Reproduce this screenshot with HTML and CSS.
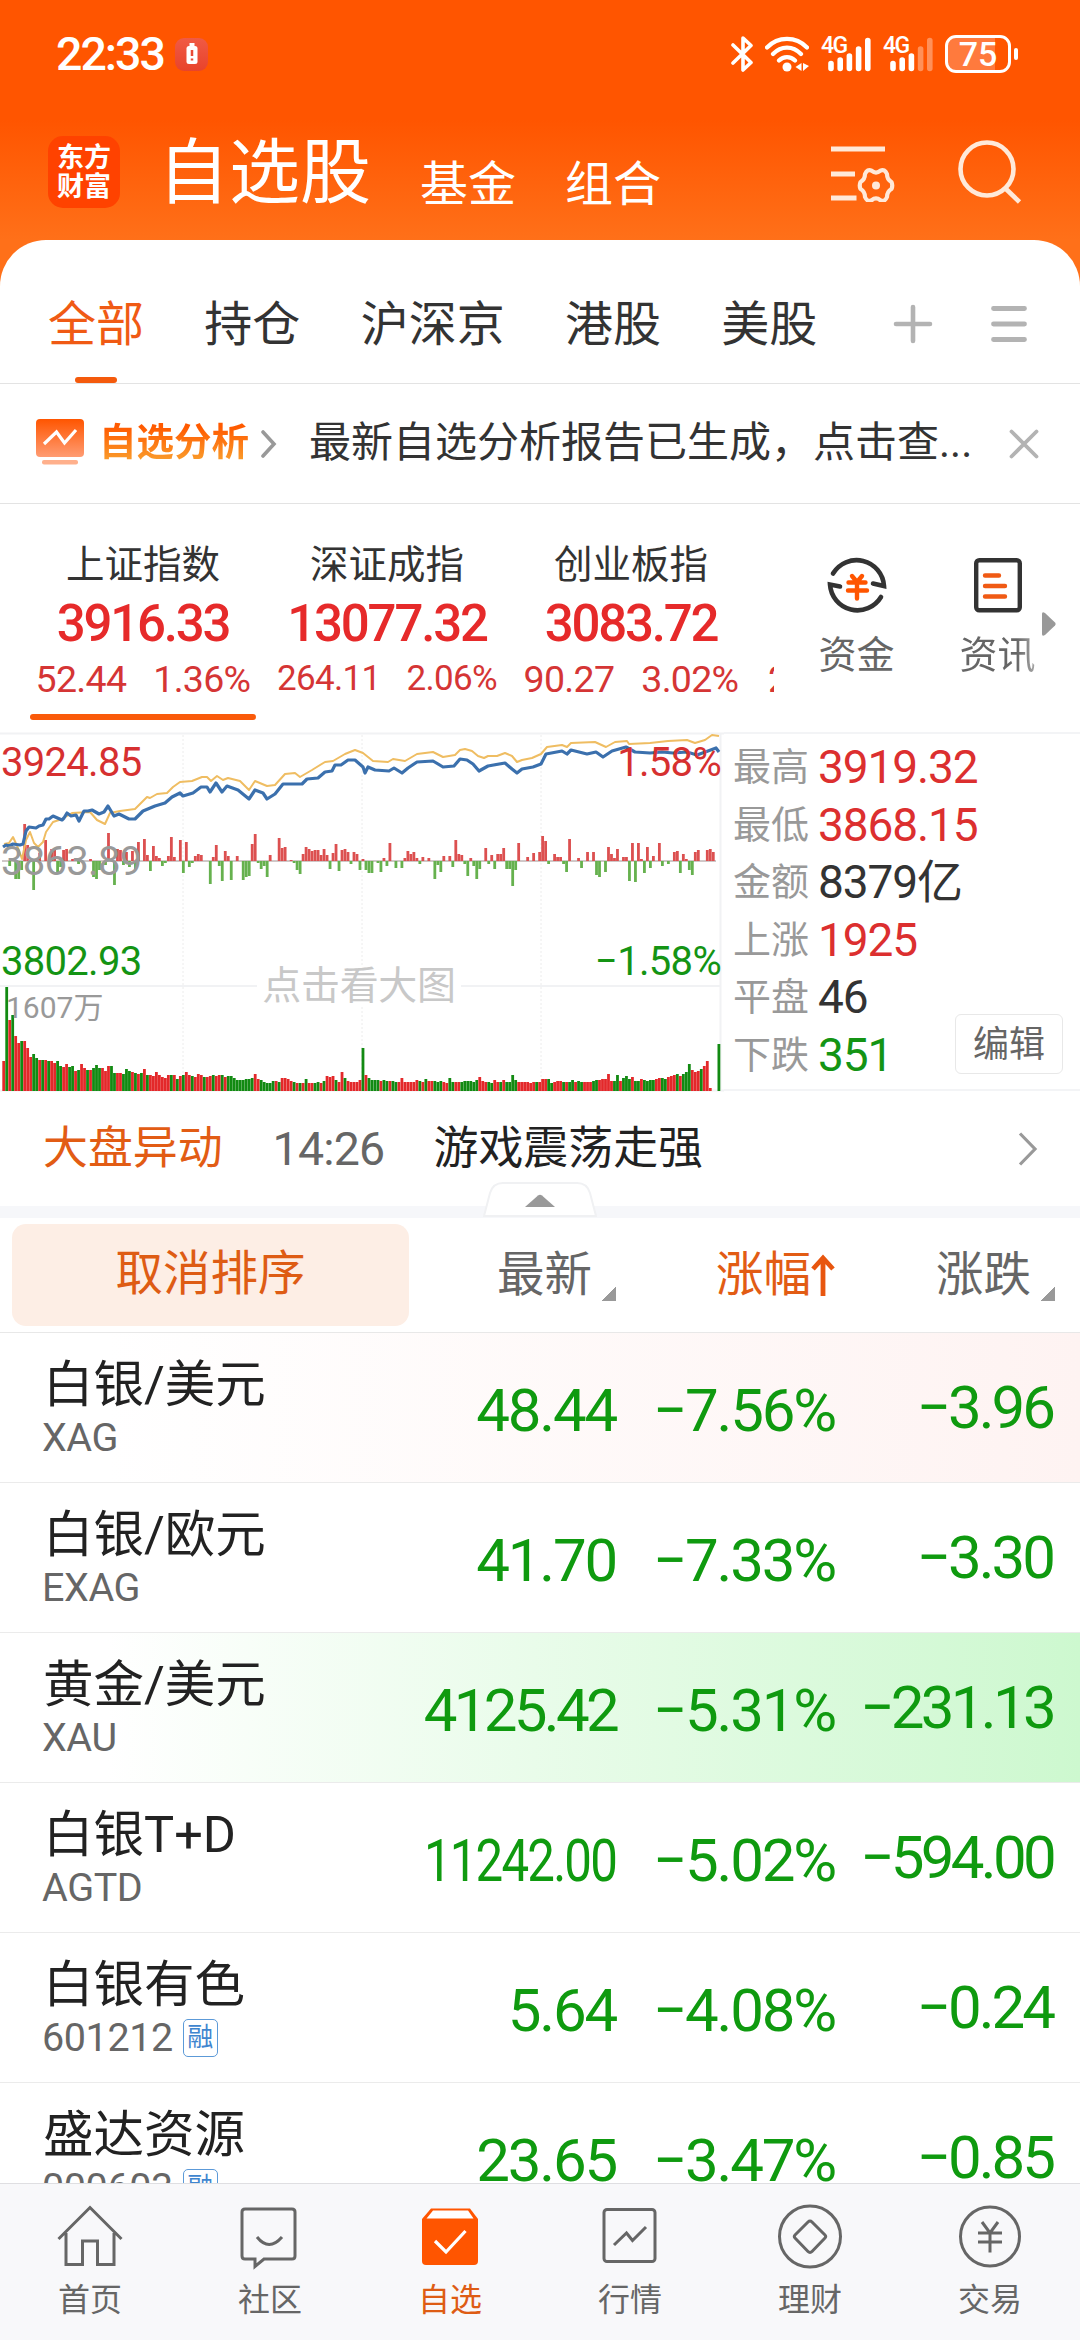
FILE: index.html
```html
<!DOCTYPE html>
<html lang="zh-CN">
<head>
	<meta charset="utf-8">
	<title>自选股</title>
	<link rel="stylesheet" href="styles.css">
</head>
<body>
	<div class="header">
		<div class="status">
			<span class="time">22:33</span>
			<span class="alert">
				<svg width="12" height="22" viewBox="0 0 12 22"><rect x="3.500" width="5" height="3" fill="#fff"/><rect x="0.500" y="3" width="11" height="18" rx="2.500" fill="#fff"/><path d="M6 7v6M6 15.500v2" stroke="#e94a35" stroke-width="2.500"/></svg>
			</span>
			<div class="status-icons">
				<svg class="bluetooth" width="23" height="36" viewBox="0 0 23 36" fill="none" stroke="#fff" stroke-width="3.600" stroke-linejoin="round" stroke-linecap="round"><path d="M2 9l18 17.500-8 7.500V2l8 7.500L2 27"/></svg>
				<svg class="wifi" width="44" height="36" viewBox="0 0 44 36" fill="none" stroke="#fff" stroke-width="4.200" stroke-linecap="round"><path d="M2 11.500c11-11.500 29-11.500 40 0M8 18c8-8.500 20-8.500 28 0M14 24.500c4.500-4.500 11.500-4.500 16 0"/><circle cx="22" cy="31" r="4.500" fill="#fff" stroke="none"/><path d="M36.500 27v8l-6-4zM38 27v8l6-5z" fill="#fff" stroke="none"/></svg>
				<span class="signal">
					<span class="net">4G</span>
					<svg width="50" height="36" viewBox="0 0 50 36" stroke="#fff" stroke-width="5.600" stroke-linecap="round"><path d="M10 27.500v5M19.200 24v8.500M28.400 20v12.500M37.600 13v19.500M46.800 4.500v28"/></svg>
				</span>
				<span class="signal">
					<span class="net">4G</span>
					<svg width="50" height="36" viewBox="0 0 50 36" stroke="#fff" stroke-width="5.600" stroke-linecap="round"><path d="M10 27.500v5M19.200 24v8.500M28.400 20v12.500"/><path d="M37.600 13v19.500M46.800 4.500v28" stroke-opacity=".35"/></svg>
				</span>
				<span class="battery"><b>75</b></span>
				<i class="battery-cap"></i>
			</div>
		</div>
		<div class="title-bar">
			<div class="logo">东方<br>财富</div>
			<h1>自选股</h1>
			<a class="sub-title">基金</a>
			<a class="sub-title">组合</a>
			<svg class="ico-setting" width="64" height="58" viewBox="0 0 64 58" fill="none" stroke="#ffe9d9" stroke-width="5"><path d="M0 5h54M0 30h24M0 54h25.500"/><path transform="translate(45 41.500)" stroke-width="4.200" stroke-linejoin="round" d="M15.500 3.500Q11 6 11 11.500Q8.500 17 4.500 14.800Q0 11-4.500 14.800Q-8.500 17-11 11.500Q-11 6-15.500 3.500Q-17 0-15.500-3.500Q-11-6-11-11.500Q-8.500-17-4.500-14.800Q0-11 4.500-14.800Q8.500-17 11-11.500Q11-6 15.500-3.500Q17 0 15.500 3.500Z"/><circle cx="45" cy="41.500" r="4" fill="#ffe9d9" stroke="none"/></svg>
			<svg class="ico-search" width="64" height="66" viewBox="0 0 64 66" fill="none" stroke="#ffe9d9" stroke-width="4.600"><circle cx="29" cy="31" r="26.500"/><path d="M47.500 50.500l14 13.500"/></svg>
		</div>
	</div>

	<div class="card">
		<div class="tabs">
			<a class="tab active">全部</a>
			<a class="tab">持仓</a>
			<a class="tab">沪深京</a>
			<a class="tab">港股</a>
			<a class="tab">美股</a>
			<svg class="ico-plus" width="40" height="40" viewBox="0 0 40 40" stroke="#b3b3b3" stroke-width="4.600" stroke-linecap="round"><path d="M3 20h34M20 3v34"/></svg>
			<svg class="ico-menu" width="36" height="38" viewBox="0 0 36 38" stroke="#b3b3b3" stroke-width="4.800" stroke-linecap="round"><path d="M2.500 3.500h31M2.500 19h31M2.500 34.500h31"/></svg>
		</div>

		<div class="notice">
			<svg class="notice-ico" width="48" height="46" viewBox="0 0 48 46">
				<defs><linearGradient id="g" x2="0" y2="1"><stop offset="0" stop-color="#ff5500"/><stop offset="1" stop-color="#ff9c73"/></linearGradient></defs>
				<rect width="48" height="38" rx="4" fill="url(#g)"/><rect x="6" y="41" width="36" height="4.500" rx="2" fill="#ffb08c"/>
				<path d="M8 25l12.500-12 8 11L40 11" fill="none" stroke="#fff" stroke-width="3.200"/>
			</svg>
			<b class="notice-title">自选分析</b>
			<svg class="chev" width="16" height="28" viewBox="0 0 16 28" fill="none" stroke="#999" stroke-width="3.600" stroke-linecap="round"><path d="M2 2l11 12L2 26"/></svg>
			<span class="notice-text">最新自选分析报告已生成，点击查...</span>
			<svg class="close" width="30" height="30" viewBox="0 0 30 30" stroke="#b3b3b3" stroke-width="3.800" stroke-linecap="round"><path d="M2.500 2.500l25 25M27.500 2.500l-25 25"/></svg>
		</div>

		<div class="indices">
			<div class="index-list">
				<div class="index selected">
					<div class="index-name">上证指数</div>
					<div class="index-price">3916.33</div>
					<div class="index-sub"><span>52.44</span><span>1.36%</span></div>
				</div>
				<div class="index small">
					<div class="index-name">深证成指</div>
					<div class="index-price">13077.32</div>
					<div class="index-sub"><span>264.11</span><span>2.06%</span></div>
				</div>
				<div class="index">
					<div class="index-name">创业板指</div>
					<div class="index-price">3083.72</div>
					<div class="index-sub"><span>90.27</span><span>3.02%</span></div>
				</div>
				<div class="index next">
					<div class="index-sub"><span>2</span></div>
				</div>
			</div>
			<div class="tool">
				<svg width="60" height="60" viewBox="0 0 60 60" fill="none" stroke="#333" stroke-width="4.600" stroke-linecap="round"><path d="M6 18.500A27.500 27.500 0 0 1 57 31l-11-2.500M54 42A27.500 27.500 0 0 1 3 29.500l10 2"/><path d="M25 21l5 6 5-6M21.500 27.500h17M21 35.500h19M30 28v15.500" stroke="#ff5500" stroke-width="4.400"/></svg>
				<span>资金</span>
			</div>
			<div class="tool">
				<svg width="48" height="60" viewBox="0 0 48 60" fill="none"><rect x="2.200" y="5.200" width="43.600" height="50" rx="3" stroke="#333" stroke-width="4.400"/><path d="M11 20.500h14M11 31h20M11 41.500h20" stroke="#f05a14" stroke-width="4.400" stroke-linecap="round"/></svg>
				<span class="faded">资讯</span>
			</div>
			<svg class="more" width="16" height="26" viewBox="0 0 16 26"><path d="M1 3Q1 0 4 2L14 11.500Q15.500 13 14 14.500L4 24Q1 26 1 23z" fill="#999"/></svg>
		</div>

		<div class="market">
			<div class="chart">
				<svg id="chart" width="724" height="360" viewBox="0 0 724 360"></svg>
				<span class="lbl top-left">3924.85</span>
				<span class="lbl mid-left">3863.89</span>
				<span class="lbl low-left">3802.93</span>
				<span class="lbl vol">1607万</span>
				<span class="lbl top-right">1.58%</span>
				<span class="lbl low-right">−1.58%</span>
				<span class="lbl hint">点击看大图</span>
			</div>
			<div class="stats">
				<div class="stat"><label>最高</label><span class="up">3919.32</span></div>
				<div class="stat"><label>最低</label><span class="up">3868.15</span></div>
				<div class="stat"><label>金额</label><span>8379亿</span></div>
				<div class="stat"><label>上涨</label><span class="up">1925</span></div>
				<div class="stat"><label>平盘</label><span>46</span></div>
				<div class="stat"><label>下跌</label><span class="down">351</span></div>
				<a class="edit">编辑</a>
			</div>
		</div>

		<div class="news">
			<span class="news-tag">大盘异动</span>
			<span class="news-time">14:26</span>
			<span class="news-text">游戏震荡走强</span>
			<svg width="20" height="36" viewBox="0 0 20 36" fill="none" stroke="#999" stroke-width="3.200"><path d="M2 2.500L17 18 2 33.500"/></svg>
		</div>
		<div class="strip">
			<svg width="114" height="36" viewBox="0 0 114 36"><path d="M1 34L7 11Q10 1 20 1H94Q104 1 107 11L113 34z" fill="#fff" stroke="#f0f1f3" stroke-width="2"/><path d="M42 25l13-11.500q2-1.500 4 0L72 25z" fill="#999"/></svg>
		</div>

		<div class="sort">
			<a class="sort-btn">取消排序</a>
			<a class="sort-col c1">最新<i></i></a>
			<a class="sort-col c2 on">涨幅<svg width="24" height="42" viewBox="0 0 24 42" fill="none" stroke="#e8560f" stroke-width="4.800"><path d="M12 42V4M2 15L12 4l10 11"/></svg></a>
			<a class="sort-col c3">涨跌<i></i></a>
		</div>

		<div class="quotes">
			<div class="row flash-red">
				<div class="stock"><span class="name">白银/美元</span><span class="code">XAG</span></div>
				<span class="num">48.44</span><span class="num">−7.56%</span><span class="num diff">−3.96</span>
			</div>
			<div class="row">
				<div class="stock"><span class="name">白银/欧元</span><span class="code">EXAG</span></div>
				<span class="num">41.70</span><span class="num">−7.33%</span><span class="num diff">−3.30</span>
			</div>
			<div class="row flash-green">
				<div class="stock"><span class="name">黄金/美元</span><span class="code">XAU</span></div>
				<span class="num fit">4125.42</span><span class="num">−5.31%</span><span class="num diff fit">−231.13</span>
			</div>
			<div class="row">
				<div class="stock"><span class="name">白银T+D</span><span class="code">AGTD</span></div>
				<span class="num narrow">11242.00</span><span class="num">−5.02%</span><span class="num diff fit">−594.00</span>
			</div>
			<div class="row">
				<div class="stock"><span class="name">白银有色</span><span class="code">601212<em>融</em></span></div>
				<span class="num">5.64</span><span class="num">−4.08%</span><span class="num diff">−0.24</span>
			</div>
			<div class="row">
				<div class="stock"><span class="name">盛达资源</span><span class="code">000603<em>融</em></span></div>
				<span class="num">23.65</span><span class="num">−3.47%</span><span class="num diff">−0.85</span>
			</div>
		</div>
	</div>

	<div class="tabbar">
		<a class="item">
			<svg width="66" height="66" viewBox="0 0 66 66"><path d="M1.500 35L33 3.500 64.500 35M9 29v31.500h16.500V37h15v23.500H57V29"/></svg>
			首页
		</a>
		<a class="item">
			<svg width="66" height="66" viewBox="0 0 66 66"><path d="M8 5h47q3 0 3 3v44q0 3-3 3H27l-9 7.500V55H8q-3 0-3-3V8q0-3 3-3zM20 33q12 15 25 0"/></svg>
			社区
		</a>
		<a class="item active">
			<svg width="66" height="66" viewBox="0 0 66 66"><path d="M5 15L14 4.500h39L61 15v42q0 4-4 4H9q-4 0-4-4z" fill="#ff5500" stroke="none"/><path d="M9.500 14.500L16 6.500h35l5.500 8z" fill="#fff" stroke="none"/><path d="M18 37l11 11L48.500 27" stroke="#fff" stroke-width="3.200"/></svg>
			自选
		</a>
		<a class="item">
			<svg width="66" height="66" viewBox="0 0 66 66"><rect x="7" y="5.500" width="51" height="52" rx="3"/><path d="M17 41l12.500-12 6 7.500L49 23"/></svg>
			行情
		</a>
		<a class="item">
			<svg width="66" height="66" viewBox="0 0 66 66"><circle cx="33" cy="32.500" r="30.500"/><path d="M31 18q2-2 4 0l13 13q1.500 1.500 0 3L35 47.500q-2 2-4 0L18 34q-1.500-1.500 0-3z"/></svg>
			理财
		</a>
		<a class="item">
			<svg width="66" height="66" viewBox="0 0 66 66"><circle cx="33" cy="32.500" r="29.500"/><path d="M25 18l8 11 8-11M21 29h24M21 38h24M33 29v19.500"/></svg>
			交易
		</a>
	</div>

	<script src="chart.js"></script>
</body>
</html>
```

FILE: styles.css
```css
body{
	margin: 0;
	width: 1080px;
	height: 2340px;
	overflow: hidden;
	display: flex;
	flex-direction: column;
	background: #ff7019;
	font-family: Roboto, "Noto Sans CJK SC", sans-serif;
	color: #333;
}
svg{
	display: block;
	flex: none;
}
h1{
	margin: 0;
	font-weight: normal;
}

/* header */
.header{
	height: 240px;
	flex: none;
	background: linear-gradient(#ff5500 50%, #ff7019);
	color: #fff;
}
.status{
	height: 108px;
	display: flex;
	align-items: center;
	padding: 0 62px 0 56px;
}
.time{
	font-size: 46.500px;
	width: 119px;
	letter-spacing: -2px;
	font-weight: 500;
}
.alert{
	width: 33px;
	height: 33px;
	border-radius: 9px;
	background: linear-gradient(#f05a44, #e8432b);
	display: flex;
	align-items: center;
	justify-content: center;
}
.status-icons{
	margin-left: auto;
	display: flex;
	align-items: center;
}
.bluetooth{
	margin-right: 11px;
}
.wifi{
	margin-right: 12px;
}
.signal{
	position: relative;
	margin-right: 12px;
}
.net{
	position: absolute;
	left: 0;
	top: 0;
	font-size: 23px;
	line-height: 19px;
	font-weight: 500;
	letter-spacing: -1.5px;
}
.battery{
	width: 60px;
	height: 32px;
	border: 3px solid #fff;
	border-radius: 11px;
	background: linear-gradient(90deg, #ff7a3d 78%, transparent 78%);
	text-align: center;
	font-size: 34px;
	line-height: 33px;
}
.battery b{
	font-weight: 500;
}
.battery-cap{
	width: 4px;
	height: 12px;
	border-radius: 2px;
	background: #fff;
	margin-left: 3px;
}
.title-bar{
	height: 132px;
	display: flex;
	align-items: flex-start;
	padding-left: 48px;
}
.logo{
	width: 72px;
	height: 64px;
	padding-top: 8px;
	margin-top: 28px;
	border-radius: 15px;
	background: #ff4200;
	font-size: 27px;
	line-height: 29px;
	font-weight: bold;
	text-align: center;
}
.title-bar h1{
	font-size: 71px;
	line-height: 80px;
	margin: 25px 0 0 38px;
}
.sub-title{
	font-size: 48px;
	line-height: 60px;
	margin: 47px 0 0 49px;
}
.ico-setting{
	margin: 36px 0 0 170px;
}
.ico-search{
	margin: 30px 0 0 63px;
}

/* card */
.card{
	flex: 1;
	min-height: 0;
	overflow: hidden;
	background: #fff;
	border-radius: 46px 46px 0 0;
}
.tabs{
	height: 143px;
	border-bottom: 1px solid #e3e3e3;
	display: flex;
	align-items: center;
	gap: 60.300px;
	padding-left: 48px;
}
.tab{
	position: relative;
	height: 143px;
	font-size: 48px;
	line-height: 169px;
}
.tab.active{
	color: #f05a14;
}
.tab.active:after{
	content: "";
	position: absolute;
	left: 27px;
	bottom: 0;
	width: 42px;
	height: 6px;
	border-radius: 3px;
	background: #f45a0c;
}
.ico-plus{
	margin: 24px 0 0 15px;
}
.ico-menu{
	margin-top: 24px;
	margin-left: -2px;
}
.notice{
	height: 119px;
	border-bottom: 1px solid #e3e3e3;
	display: flex;
	align-items: center;
	padding-left: 36px;
}
.notice-ico{
	margin-top: -4px;
}
.notice-title{
	font-size: 37.500px;
	line-height: 50px;
	width: 151px;
	margin: -4px 11px 0 15px;
	background: linear-gradient(#ff5a00 20%, #fa9a2a 85%);
	-webkit-background-clip: text;
	color: transparent;
}
.notice-text{
	font-size: 42px;
	line-height: 60px;
	width: 664px;
	margin: -2px 0 0 32px;
	white-space: nowrap;
}
.close{
	margin-left: 36px;
}

/* index strip */
.indices{
	height: 228px;
	display: flex;
}
.index-list{
	width: 753px;
	padding-left: 21px;
	display: flex;
	overflow: hidden;
}
.index{
	flex: none;
	width: 244px;
	text-align: center;
	position: relative;
}
.index-name{
	font-size: 38.500px;
	line-height: 50px;
	margin-top: 36px;
}
.index-price{
	font-size: 51px;
	line-height: 60px;
	font-weight: 500;
	letter-spacing: -2.200px;
	color: #e62a2a;
	margin-top: 4px;
}
.index-sub{
	font-size: 37.500px;
	line-height: 50px;
	letter-spacing: -.7px;
	color: #d53535;
	display: flex;
	justify-content: center;
	gap: 27px;
}
.small .index-sub{
	font-size: 35px;
	gap: 26px;
}
.next .index-sub{
	margin-top: 150px;
	margin-left: 15px;
	justify-content: flex-start;
}
.selected:after{
	content: "";
	position: absolute;
	left: 9px;
	top: 210px;
	width: 226px;
	height: 6px;
	border-radius: 3px;
	background: #fa5a0a;
}
.tool{
	margin: 51px 0 0 44px;
	width: 77px;
	font-size: 38px;
	line-height: 50px;
	color: #666;
	display: flex;
	flex-direction: column;
	align-items: center;
	gap: 15px;
}
.tool + .tool{
	margin-left: 64px;
}
.faded{
	background: linear-gradient(90deg, #666 75%, #aaa);
	-webkit-background-clip: text;
	color: transparent;
}
.more{
	margin: 107px 0 0 5px;
}

/* market chart */
.market{
	display: flex;
	height: 359px;
}
.chart{
	position: relative;
	width: 724px;
}
.lbl{
	position: absolute;
	font-size: 40px;
	line-height: 40px;
	letter-spacing: -.7px;
	white-space: nowrap;
}
.top-left{
	left: 1px;
	top: 11px;
	color: #d63030;
}
.mid-left{
	left: 1px;
	top: 110px;
	color: #999;
}
.low-left{
	left: 1px;
	top: 210px;
	color: #149414;
}
.vol{
	left: 6px;
	top: 258px;
	font-size: 30px;
	line-height: 36px;
	letter-spacing: 0;
	color: #999;
}
.top-right{
	right: 3px;
	top: 11px;
	color: #d63030;
}
.low-right{
	right: 3px;
	top: 210px;
	color: #149414;
}
.hint{
	left: 257px;
	top: 234px;
	width: 204px;
	text-align: center;
	font-size: 39px;
	letter-spacing: -.3px;
	color: #c8c8c8;
	background: #fff;
}
.stats{
	flex: 1;
	position: relative;
	border-top: 2px solid #f3f4f6;
	border-bottom: 2px solid #f3f4f6;
	padding: 4px 0 0 9px;
	box-sizing: border-box;
}
.stat{
	display: flex;
	height: 57.600px;
	line-height: 58px;
	font-size: 46px;
	letter-spacing: -1.100px;
}
.stat label{
	width: 85px;
	font-size: 38px;
	letter-spacing: 0;
	color: #999;
}
.stat .up{
	color: #dc2f2f;
}
.stat .down{
	color: #149414;
}
.edit{
	position: absolute;
	right: 17px;
	bottom: 15px;
	width: 106px;
	height: 58px;
	line-height: 60px;
	border: 1px solid #e8e8e8;
	border-radius: 6px;
	text-align: center;
	font-size: 36px;
	color: #666;
	background: #fff;
}
.news{
	height: 115px;
	display: flex;
	align-items: center;
	padding: 0 42px 0 43px;
	font-size: 44.900px;
	line-height: 60px;
}
.news-tag{
	color: #e25c14;
}
.news-time{
	font-size: 46.500px;
	letter-spacing: -.8px;
	color: #666;
	width: 161px;
	margin: 1px 0 0 50px;
}
.news-text{
	color: #222;
}
.news svg{
	margin-left: auto;
}
.strip{
	height: 12px;
	background: #f6f7fa;
	display: flex;
	justify-content: center;
	align-items: flex-end;
}

/* list */
.sort{
	height: 114px;
	border-bottom: 1px solid #e8e8e8;
	display: grid;
	grid-template-columns: 397px 207px 219px 220px;
	align-items: center;
	padding-left: 12px;
	font-size: 47.500px;
	color: #666;
}
.sort-btn{
	height: 102px;
	line-height: 100px;
	border-radius: 14px;
	background: #fdeee5;
	color: #de5c14;
	text-align: center;
}
.sort-col{
	display: flex;
	justify-content: flex-end;
	align-items: center;
	height: 102px;
	line-height: 100px;
}
.sort-col i{
	width: 14px;
	height: 15px;
	margin: 36px 0 0 10px;
	background: linear-gradient(135deg, transparent 50%, #999 50%);
}
.sort-col.on{
	color: #e25c14;
}
.row{
	height: 149px;
	border-bottom: 1px solid #ebebeb;
	display: grid;
	grid-template-columns: 374px 199px 219px 218px;
	padding-left: 43px;
	color: #0f9a0f;
}
.flash-red{
	background: linear-gradient(90deg, #fff 10%, #fef3f2);
}
.flash-green{
	background: linear-gradient(90deg, #fff 10%, #cdf8cf);
}
.stock{
	display: flex;
	flex-direction: column;
}
.name{
	font-size: 50.500px;
	line-height: 60px;
	margin-top: 22px;
	color: #222;
}
.code{
	display: flex;
	align-items: center;
	font-size: 39.500px;
	line-height: 46px;
	letter-spacing: -.4px;
	margin-left: -1px;
	color: #666;
}
.code em{
	width: 33px;
	height: 36px;
	margin-left: 10px;
	border: 1px solid #5c9ad8;
	border-radius: 5px;
	font-size: 26px;
	line-height: 35px;
	font-style: normal;
	text-align: center;
	letter-spacing: 0;
	color: #3f86cf;
}
.num{
	font-size: 60px;
	line-height: 155px;
	letter-spacing: -2.200px;
	text-align: right;
	white-space: nowrap;
	transform-origin: right;
}
.diff{
	line-height: 149px;
	letter-spacing: -3px;
}
.fit{
	letter-spacing: -3.700px;
}
.narrow{
	transform: scaleX(.82);
	margin-left: -40px;
}

/* bottom bar */
.tabbar{
	height: 156px;
	flex: none;
	border-top: 1px solid #dfdfe2;
	background: #f8f8fa;
	display: grid;
	grid-template-columns: repeat(6, 1fr);
}
.item{
	display: flex;
	flex-direction: column;
	align-items: center;
	padding-top: 20px;
	font-size: 32px;
	line-height: 40px;
	gap: 10px;
	color: #666;
}
.item svg{
	fill: none;
	stroke: #666;
	stroke-width: 3;
}
.item.active{
	color: #de5c14;
}
```

FILE: chart.js
```js
var NS = "http://www.w3.org/2000/svg";
var chart = document.querySelector("#chart");
var ZERO = 129;
var BOTTOM = 359;
var STEP = 2.994;

var price = "3,115 6,113 9,114 13,112 20,113 23,112 26,99 29,95 36,96 39,94 43,93 46,87 49,87 53,84 62,88 64,86 67,81 71,84 76,83 79,89 84,79 88,79 92,78 99,82 104,80 108,74 114,84 119,82 129,87 135,87 143,79 155,74 165,71 172,65 180,61 183,64 193,61 201,55 207,55 210,60 216,51 222,60 227,54 238,58 249,67 255,58 263,61 267,67 275,62 283,52 302,52 307,47 318,46 325,40 332,39 335,33 341,33 348,28 355,28 363,35 365,41 368,35 375,38 389,39 394,36 402,41 408,36 417,30 433,29 443,35 454,34 460,27 467,28 473,32 479,39 488,34 505,31 512,37 517,41 522,37 533,35 541,32 546,22 562,19 567,22 571,18 587,22 596,20 603,25 612,19 626,15 635,20 650,21 662,20 673,21 687,20 697,23 708,19 716,16 719,20";
var lead = "4,112 9,111 13,105 18,116 22,127 26,108 30,100 34,111 38,115 43,110 46,100 53,90 62,87 72,81 90,80 97,88 105,92 110,81 120,79 135,77 142,70 147,65 150,66 157,62 167,61 173,55 180,50 192,49 202,45 207,45 211,49 217,44 223,48 228,46 240,49 249,58 255,49 267,54 275,53 285,42 295,41 300,45 312,38 325,30 333,29 345,22 355,18 363,21 373,29 388,30 393,27 405,29 417,22 433,20 443,25 455,23 460,18 465,17 472,19 478,24 484,26 488,24 497,24 505,21 512,24 517,30 522,28 532,26 541,22 547,15 562,13 567,15 571,11 595,10 606,15 615,10 627,9 629,12 650,11 668,9 687,8 695,11 705,8 712,3 719,4";

// volume per minute, r = up, g = down
var volume = "30r 104g 71r 76g 55r 48r 50g 50r 43r 34r 37g 33g 31r 31g 31r 30g 30r 28r 30g 25g 24r 27r 24g 25g 20r 21g 27r 23r 21g 21r 23g 26g 23g 23r 20r 25r 25g 18g 18r 18r 17g 22g 20g 19r 18g 17r 18g 22r 16g 16r 15r 19r 16r 14r 13r 16r 16g 16r 12g 15r 16g 19r 16r 15g 14r 17r 16r 14g 14r 15r 16g 15r 16r 16g 14r 15g 15g 13g 11g 11g 11g 12g 12g 13g 17r 12r 11g 9g 8g 8g 10g 10r 9g 13r 13r 12r 10r 9g 8r 8g 8r 12g 8r 8r 8g 9g 8r 10g 15r 14r 15r 11g 9r 19r 13g 10r 9r 9r 9r 11r 43g 16r 13g 11g 11g 11g 10r 11g 10g 10r 10g 9g 9r 13r 9r 9r 9r 9r 11r 10g 9r 12g 10r 10r 10g 9g 10g 9r 8r 13g 9g 9r 9r 9g 10g 10g 10g 9g 11g 14r 10r 9r 9g 8g 11r 9r 9g 11r 9g 9g 16g 11g 9r 9r 9r 9r 8r 9r 9g 9r 12r 12r 12g 8g 9r 10r 10r 9g 9r 9g 11g 9r 10g 9g 9r 9r 9r 10g 11g 11r 12r 12r 17r 10r 10g 16g 10r 13g 15g 12g 14r 10g 10g 12r 11g 10g 11g 11g 12r 13r 13g 12g 14r 15r 16r 17g 15r 17g 19g 27g 21r 19r 20r 22g 25r 30r 3r 0g 47g".split(" ");

var force = {
	2: -5, 4: -18, 5: -18, 6: -9, 7: 37, 8: 16, 10: -29, 12: 8, 14: 21, 16: 12, 17: 13, 18: -11, 19: -6, 20: 11, 21: 12, 23: 2, 25: -3, 29: 2,
	30: -16, 31: -18, 32: -9, 34: -4, 35: 28, 37: -24, 38: 12, 39: 11, 40: -4, 41: 9, 42: -6, 43: 10, 44: -8, 45: 19, 47: 22, 48: 6, 49: -10,
	50: 15, 51: 5, 52: 3, 53: -5, 54: -2, 55: 5, 56: 24, 57: 4, 59: 21, 60: -12, 61: 19, 62: -6, 63: -2, 64: 5, 65: 7, 66: 6, 69: -23,
	70: 4, 71: 16, 72: -5, 73: -20, 74: 10, 75: 5, 76: -19, 78: 5, 80: -19, 81: -16, 82: -15, 83: 17, 84: 27, 85: -2, 86: -8, 87: -5, 88: -16, 89: 6,
	92: 23, 93: 13, 94: 14, 96: 1, 97: -2, 98: -9, 99: -13, 100: 7, 101: 14, 102: 12, 103: 10, 104: 11, 105: 11, 106: 6, 107: 12, 108: 6, 109: -8,
	110: 8, 111: 17, 112: -10, 113: 11, 114: 12, 115: 9, 116: -3, 117: 9, 118: 7, 119: -9, 120: 2, 121: -9, 122: -12, 123: -12, 125: -2, 126: -11, 127: 3, 128: -5, 129: 18,
	131: -7, 133: -7, 134: 3, 135: 10, 136: 7, 137: 9, 138: 3, 139: -3, 140: 4, 142: 3, 144: -18, 145: -4, 146: -11, 147: 5, 149: 5, 150: -6, 151: 21, 152: 7, 153: 6, 154: -3, 155: -15, 156: 3, 157: -5, 158: -18, 159: -8,
	161: 13, 162: -3, 163: 6, 164: -8, 165: 7, 166: 7, 167: 13, 168: -8, 169: -8, 170: -25, 171: -9, 172: 18, 175: 4, 177: 8, 179: 9, 180: 25, 181: 20, 182: -3, 184: 7, 185: 4, 186: 4, 187: -3, 188: -11, 189: 22,
	192: 3, 193: -7, 195: 9, 197: 9, 198: -14, 199: -16, 201: -11, 202: 14, 203: 7, 204: 3, 205: 12, 207: 4, 208: 4, 209: -20, 210: 18, 211: -21, 212: 18, 213: 2, 214: -12, 215: 14, 216: -7, 217: 5, 219: 18,
	220: -5, 222: -3, 224: 9, 225: 10, 226: -12, 227: 7, 228: 2, 229: -9, 230: -14, 231: 9, 232: 11, 235: 11, 236: 12, 237: 9
};

function add(tag, attrs){
	var el = document.createElementNS(NS, tag);
	for (var k in attrs) {
		el.setAttribute(k, attrs[k]);
	}
	chart.appendChild(el);
}

// grid
add("path", {d: "M0 1.500H724M0 254H721M0 358.500H724M720.500 1V359", stroke: "#f1f2f4", "stroke-width": 2});
add("path", {d: "M183 3V359M362 3V359M541 3V359", stroke: "#ececec", "stroke-width": 1, "stroke-dasharray": "2 2"});
add("path", {d: "M2 " + ZERO + "H716", stroke: "#a09090", "stroke-width": 1});

for (var i in force) {
	var f = force[i];
	add("rect", {
		x: 2.3 + i * STEP,
		y: f > 0 ? ZERO - f : ZERO,
		width: 2.8,
		height: Math.abs(f),
		fill: f > 0 ? "#dc5050" : "#66b14e"
	});
}

volume.forEach(function(v, i){
	var h = parseInt(v);
	add("rect", {
		x: h == 47 ? 717.5 : 2.3 + i * STEP,
		y: BOTTOM - h,
		width: 2.8,
		height: h,
		fill: v.slice(-1) == "r" ? "#e3282a" : "#128a12"
	});
});

add("polyline", {points: lead, fill: "none", stroke: "#efbd62", "stroke-width": 2, "stroke-linejoin": "round"});
add("polyline", {points: price, fill: "none", stroke: "#3b70ad", "stroke-width": 3.2, "stroke-linejoin": "round"});
```
